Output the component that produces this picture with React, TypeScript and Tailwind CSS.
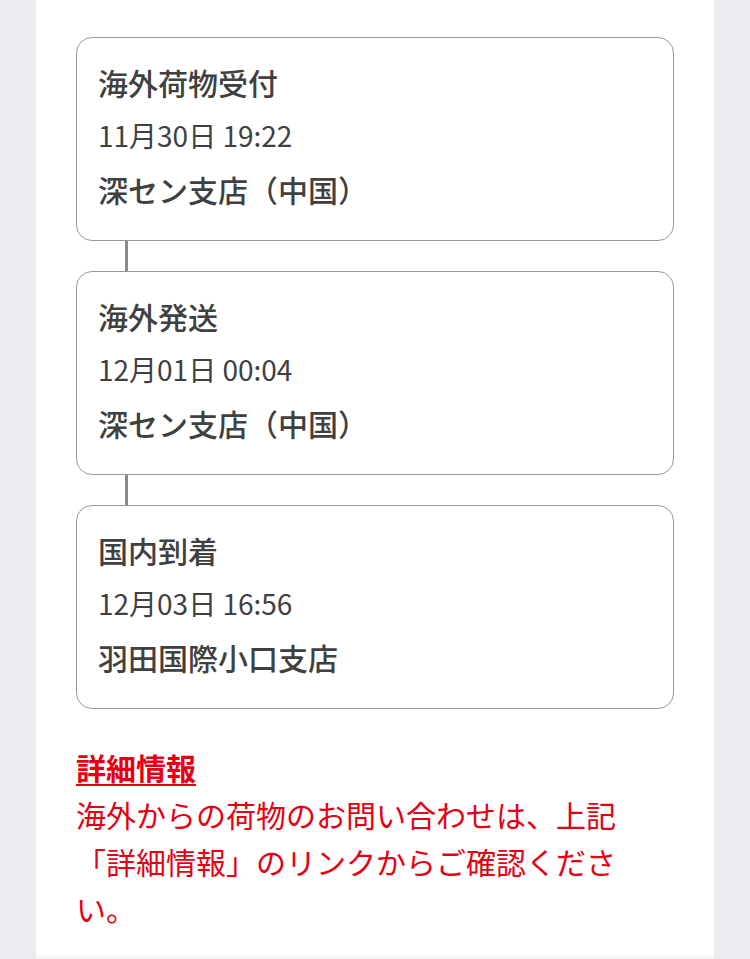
import React from "react";

const font = { fontFamily: '"Noto Sans CJK JP", "Noto Sans", sans-serif' };

type Item = { title: string; date: string; place: string };

const items: Item[] = [
  { title: "海外荷物受付", date: "11月30日 19:22", place: "深セン支店（中国）" },
  { title: "海外発送", date: "12月01日 00:04", place: "深セン支店（中国）" },
  { title: "国内到着", date: "12月03日 16:56", place: "羽田国際小口支店" },
];

function Card({ item }: { item: Item }) {
  return (
    <div className="rounded-[16px] border border-[#9a9a9a] bg-white pl-[21px] pr-4 pt-[17px] pb-[23px] text-[#404040]">
      <div className="text-[30px] leading-[54px] font-medium">{item.title}</div>
      <div className="text-[28px] leading-[53px] font-normal">{item.date}</div>
      <div className="text-[30px] leading-[55px] font-medium">{item.place}</div>
    </div>
  );
}

function Connector() {
  return (
    <div className="h-[30px] pl-[49px]">
      <div className="h-full w-[3px] bg-[#8c8c8c]" />
    </div>
  );
}

export default function App() {
  return (
    <div className="min-h-[959px] w-[750px] bg-[#ebebf0]" style={font}>
      <div className="mx-[36px] h-[959px] overflow-hidden bg-white px-[40px] pt-[37px] relative">
        <div className="flex flex-col">
          {items.map((it, i) => (
            <React.Fragment key={i}>
              {i > 0 && <Connector />}
              <Card item={it} />
            </React.Fragment>
          ))}
        </div>
        <div className="mt-[35px] text-[#e60012] text-[30px] leading-[47px]">
          <div>
            <span className="font-bold underline decoration-[2px] underline-offset-[4px]">詳細情報</span>
          </div>
          <p>海外からの荷物のお問い合わせは、上記「詳細情報」のリンクからご確認ください。</p>
        </div>
        <div className="absolute bottom-0 left-0 right-0 h-[5px] bg-gradient-to-b from-white to-[#f2f2f2]" />
      </div>
    </div>
  );
}
